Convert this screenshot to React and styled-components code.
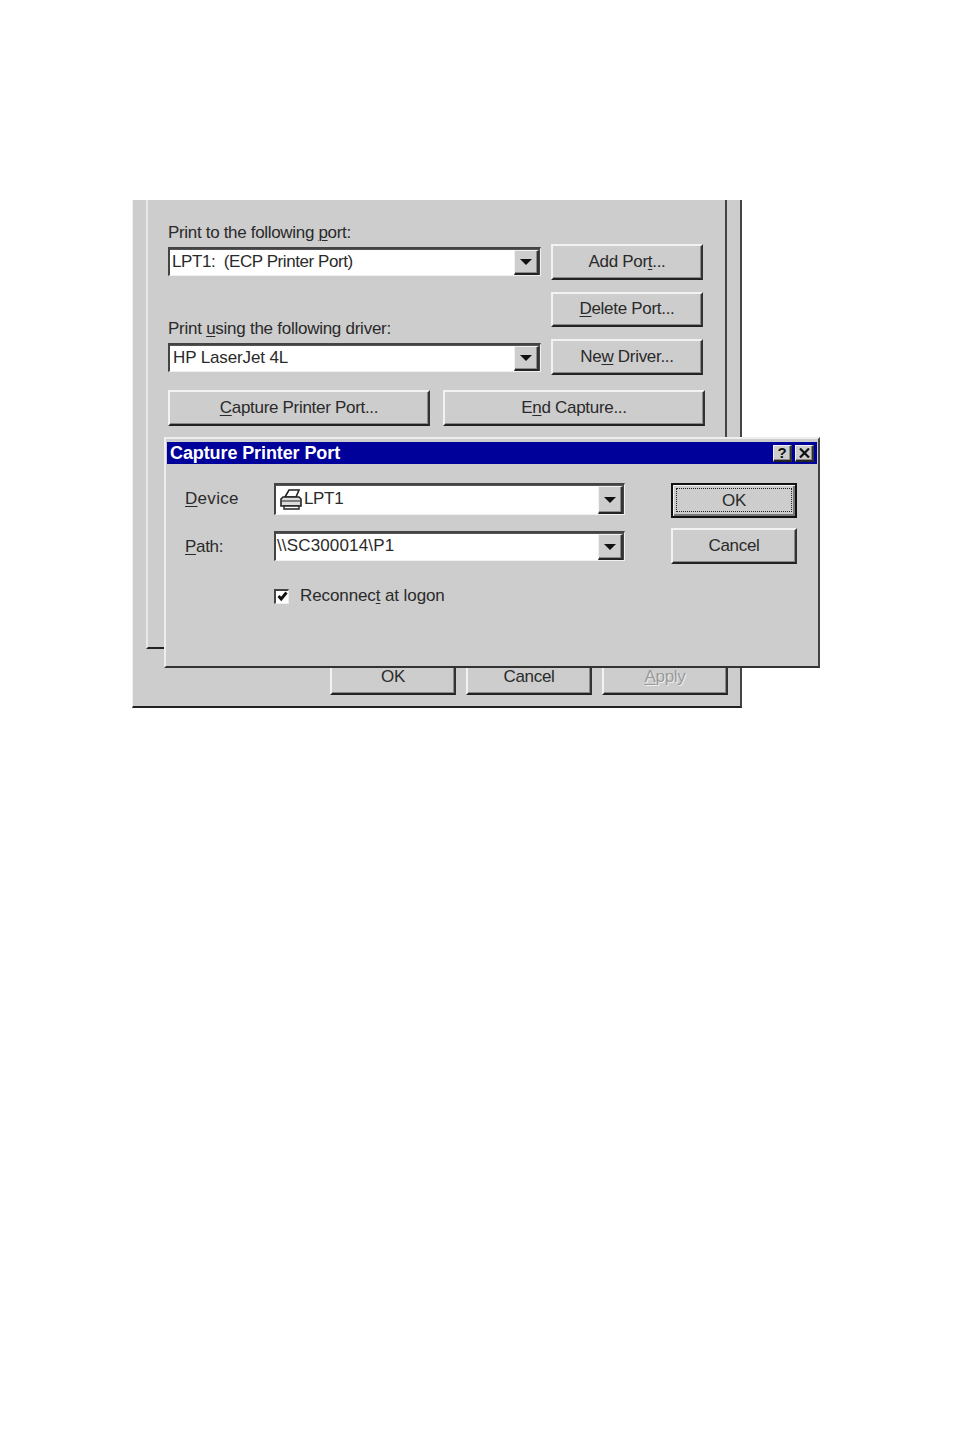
import React from 'react';
import styled, { createGlobalStyle, css } from 'styled-components';

const Global = createGlobalStyle`
    html, body {
        margin: 0;
        background: #fff;
    }
    body {
        font-family: "Liberation Sans", Arial, sans-serif;
        font-size: 17px;
        color: #2a2a2a;
    }
`
const Page = styled.div`
    padding: 200px 0 723px 132px;
`
const Window = styled.div`
    position: relative;
    display: flex;
    flex-flow: column nowrap;
    box-sizing: border-box;
    width: 610px;
    height: 508px;
    padding: 0 13px 0 13px;
    background: #cdcdcd;
    border-left: 1px solid #eeeeee;
    border-right: 2px solid #444;
    border-bottom: 2px solid #222;
`
const Panel = styled.div`
    box-sizing: border-box;
    display: flex;
    flex-flow: column nowrap;
    height: 449px;
    padding: 22px 0 0 20px;
    border-left: 2px solid #e8e8e8;
    border-right: 2px solid #444;
    border-bottom: 2px solid #222;
`
const PortGrid = styled.div`
    display: grid;
    grid-template-columns: 373px 152px;
    column-gap: 10px;
`
const Column = styled.div`
    display: flex;
    flex-flow: column nowrap;
`
const Stack = styled.div`
    display: flex;
    flex-flow: column nowrap;
    gap: ${props => props.$gap || 12}px;
    padding-top: ${props => props.$top || 0}px;
`
const Label = styled.div`
    height: 20px;
    margin-top: ${props => props.$top || 0}px;
    margin-bottom: 5px;
    line-height: 22px;
    letter-spacing: ${props => props.$spacing}px;
    white-space: nowrap;
`
const Key = styled.u`
    text-underline-offset: 2px;
    text-decoration-thickness: 1px;
`
const raised = css`
    background: #cdcdcd;
    border-style: solid;
    border-color: #f2f2f2 #333 #222 #f2f2f2;
    border-width: 2px 2px 2px 2px;
    box-shadow: inset -1px -1px 0 #8a8a8a;
`
const Button = styled.div`
    ${raised}
    box-sizing: border-box;
    display: flex;
    align-items: center;
    justify-content: center;
    width: ${props => props.$width || 152}px;
    height: ${props => props.$height || 35.5}px;
    letter-spacing: -0.3px;
    white-space: pre;
    color: ${props => props.$disabled ? '#9a9a9a' : 'inherit'};
    text-shadow: ${props => props.$disabled ? '1px 1px 0 #efefef' : 'none'};
`
const DefaultButton = styled(Button)`
    position: relative;
    border: 2px solid #111;
    box-shadow: inset 1px 1px 0 #f2f2f2, inset -2px -2px 0 #777;

    &::after {
        content: '';
        position: absolute;
        inset: 3px 3px 4px 3px;
        border: 1px dotted #222;
    }
`
const CaptureRow = styled.div`
    display: flex;
    gap: 13px;
    margin-top: 15.5px;
`
const Footer = styled.div`
    display: flex;
    justify-content: flex-end;
    gap: 10px;
    margin-top: 10px;
    margin-right: -1px;
`
const ComboBox = styled.div`
    box-sizing: border-box;
    display: flex;
    align-items: stretch;
    height: ${props => props.$height || 29}px;
    background: #fff;
    border-style: solid;
    border-color: #444 #f0f0f0 #f0f0f0 #444;
    border-width: 2px 1px 1px 2px;
    box-shadow: inset 0 1px 0 #555, inset -1px 0 0 #444;
`
const ComboText = styled.div`
    flex: 1;
    display: flex;
    align-items: center;
    gap: ${props => props.$gap || 0}px;
    padding: 0 0 1px ${props => props.$left || 1}px;
    letter-spacing: ${props => props.$spacing}px;
    white-space: pre;
`
const Arrow = styled.div`
    ${raised}
    box-sizing: border-box;
    display: flex;
    align-items: center;
    justify-content: center;
    flex: none;
    width: 25px;
    margin: 1px 1px 0 0;
    border-width: 1px 2px 2px 1px;

    &::after {
        content: '';
        border-style: solid;
        border-width: 6px 6px 0 6px;
        border-color: #111 transparent transparent transparent;
    }
`
const Dialog = styled.div`
    position: absolute;
    left: 31px;
    top: 237px;
    box-sizing: border-box;
    width: 656px;
    height: 231px;
    padding: 3px 1px 0 1px;
    background: #cdcdcd;
    border-style: solid;
    border-color: #eeeeee #444 #333 #eeeeee;
    border-width: 2px;
`
const TitleBar = styled.div`
    display: flex;
    align-items: center;
    justify-content: space-between;
    height: 22px;
    padding: 0 3px;
    background: #00009a;
    color: #fff;
`
const TitleText = styled.div`
    font-size: 18px;
    font-weight: 700;
    letter-spacing: -0.1px;
    white-space: nowrap;
`
const TitleButtons = styled.div`
    display: flex;
    gap: 3px;
`
const TitleButton = styled.div`
    ${raised}
    box-sizing: border-box;
    display: flex;
    align-items: center;
    justify-content: center;
    width: 19px;
    height: 17px;
    border-width: 1px 2px 2px 1px;
    font-size: 15px;
    font-weight: 700;
    line-height: 1;
    color: #111;
`
const DialogBody = styled.div`
    display: flex;
    justify-content: space-between;
    padding: 19px 20px 0 18px;
`
const Fields = styled.div`
    display: grid;
    grid-template-columns: 89px 351px;
    grid-auto-rows: min-content;
    row-gap: 16px;
    align-items: center;
`
const FieldLabel = styled.div`
    padding-top: ${props => props.$top || 0}px;
    letter-spacing: ${props => props.$spacing}px;
`
const CheckRow = styled.div`
    grid-column: 2;
    display: flex;
    align-items: center;
    gap: 11px;
    margin-top: 9px;
    letter-spacing: -0.1px;
`
const CheckBox = styled.div`
    box-sizing: border-box;
    display: flex;
    align-items: center;
    justify-content: center;
    width: 15px;
    height: 15px;
    background: #fff;
    border-style: solid;
    border-color: #444 #eee #eee #444;
    border-width: 2px 1px 1px 2px;
`

const PrinterIcon = () => (
    <svg width="22" height="22" viewBox="0 0 22 22">
        <path d="M5 9 L9 2 H19 L16 9 Z" fill="#fff" stroke="#222" strokeWidth="1.6" />
        <path d="M1 11 L3 9 H19 L21 11 V18 H1 Z" fill="#dcdcdc" stroke="#222" strokeWidth="1.6" />
        <path d="M2 13 H20" stroke="#555" strokeWidth="1.4" />
        <path d="M4 18 H19 V21 H4 Z" fill="#fff" stroke="#222" strokeWidth="1.4" />
    </svg>
)

const CloseIcon = () => (
    <svg width="11" height="10" viewBox="0 0 11 10">
        <path d="M1 0.5 L10 9.5 M10 0.5 L1 9.5" stroke="#111" strokeWidth="2.2" />
    </svg>
)

const CheckIcon = () => (
    <svg width="11" height="11" viewBox="0 0 11 11">
        <path d="M1.5 5 L4.2 8 L9.5 1.5" fill="none" stroke="#111" strokeWidth="2.8" />
    </svg>
)

const App = () => (
    <Page>
        <Global />
        <Window>
            <Panel>
                <PortGrid>
                    <Column>
                        <Label $spacing={-0.32}>Print to the following <Key>p</Key>ort:</Label>
                        <ComboBox>
                            <ComboText $left={2} $spacing={-0.43}>LPT1:  (ECP Printer Port)</ComboText>
                            <Arrow />
                        </ComboBox>
                        <Label $top={42} $spacing={-0.26}>Print <Key>u</Key>sing the following driver:</Label>
                        <ComboBox>
                            <ComboText $left={3} $spacing={-0.13}>HP LaserJet 4L</ComboText>
                            <Arrow />
                        </ComboBox>
                    </Column>
                    <Stack $top={22}>
                        <Button><span>Add Por<Key>t</Key>...</span></Button>
                        <Button><span><Key>D</Key>elete Port...</span></Button>
                        <Button><span>Ne<Key>w</Key> Driver...</span></Button>
                    </Stack>
                </PortGrid>
                <CaptureRow>
                    <Button $width={262}><span><Key>C</Key>apture Printer Port...</span></Button>
                    <Button $width={262}><span>E<Key>n</Key>d Capture...</span></Button>
                </CaptureRow>
            </Panel>
            <Footer>
                <Button $width={126}>OK</Button>
                <Button $width={126}>Cancel</Button>
                <Button $width={126} $disabled><span><Key>A</Key>pply</span></Button>
            </Footer>
            <Dialog>
                <TitleBar>
                    <TitleText>Capture Printer Port</TitleText>
                    <TitleButtons>
                        <TitleButton>?</TitleButton>
                        <TitleButton><CloseIcon /></TitleButton>
                    </TitleButtons>
                </TitleBar>
                <DialogBody>
                    <Fields>
                        <FieldLabel $spacing={0.3}><Key>D</Key>evice</FieldLabel>
                        <ComboBox $height={32}>
                            <ComboText $left={4} $gap={2} $spacing={-0.35}><PrinterIcon />LPT1</ComboText>
                            <Arrow />
                        </ComboBox>
                        <FieldLabel $top={2} $spacing={-0.3}><Key>P</Key>ath:</FieldLabel>
                        <ComboBox $height={30}>
                            <ComboText $left={1} $spacing={0.15}>\\SC300014\P1</ComboText>
                            <Arrow />
                        </ComboBox>
                        <CheckRow>
                            <CheckBox><CheckIcon /></CheckBox>
                            <span>Reconnec<Key>t</Key> at logon</span>
                        </CheckRow>
                    </Fields>
                    <Stack $gap={10}>
                        <DefaultButton $width={126} $height={35}>OK</DefaultButton>
                        <Button $width={126} $height={36}>Cancel</Button>
                    </Stack>
                </DialogBody>
            </Dialog>
        </Window>
    </Page>
);

export default App;
